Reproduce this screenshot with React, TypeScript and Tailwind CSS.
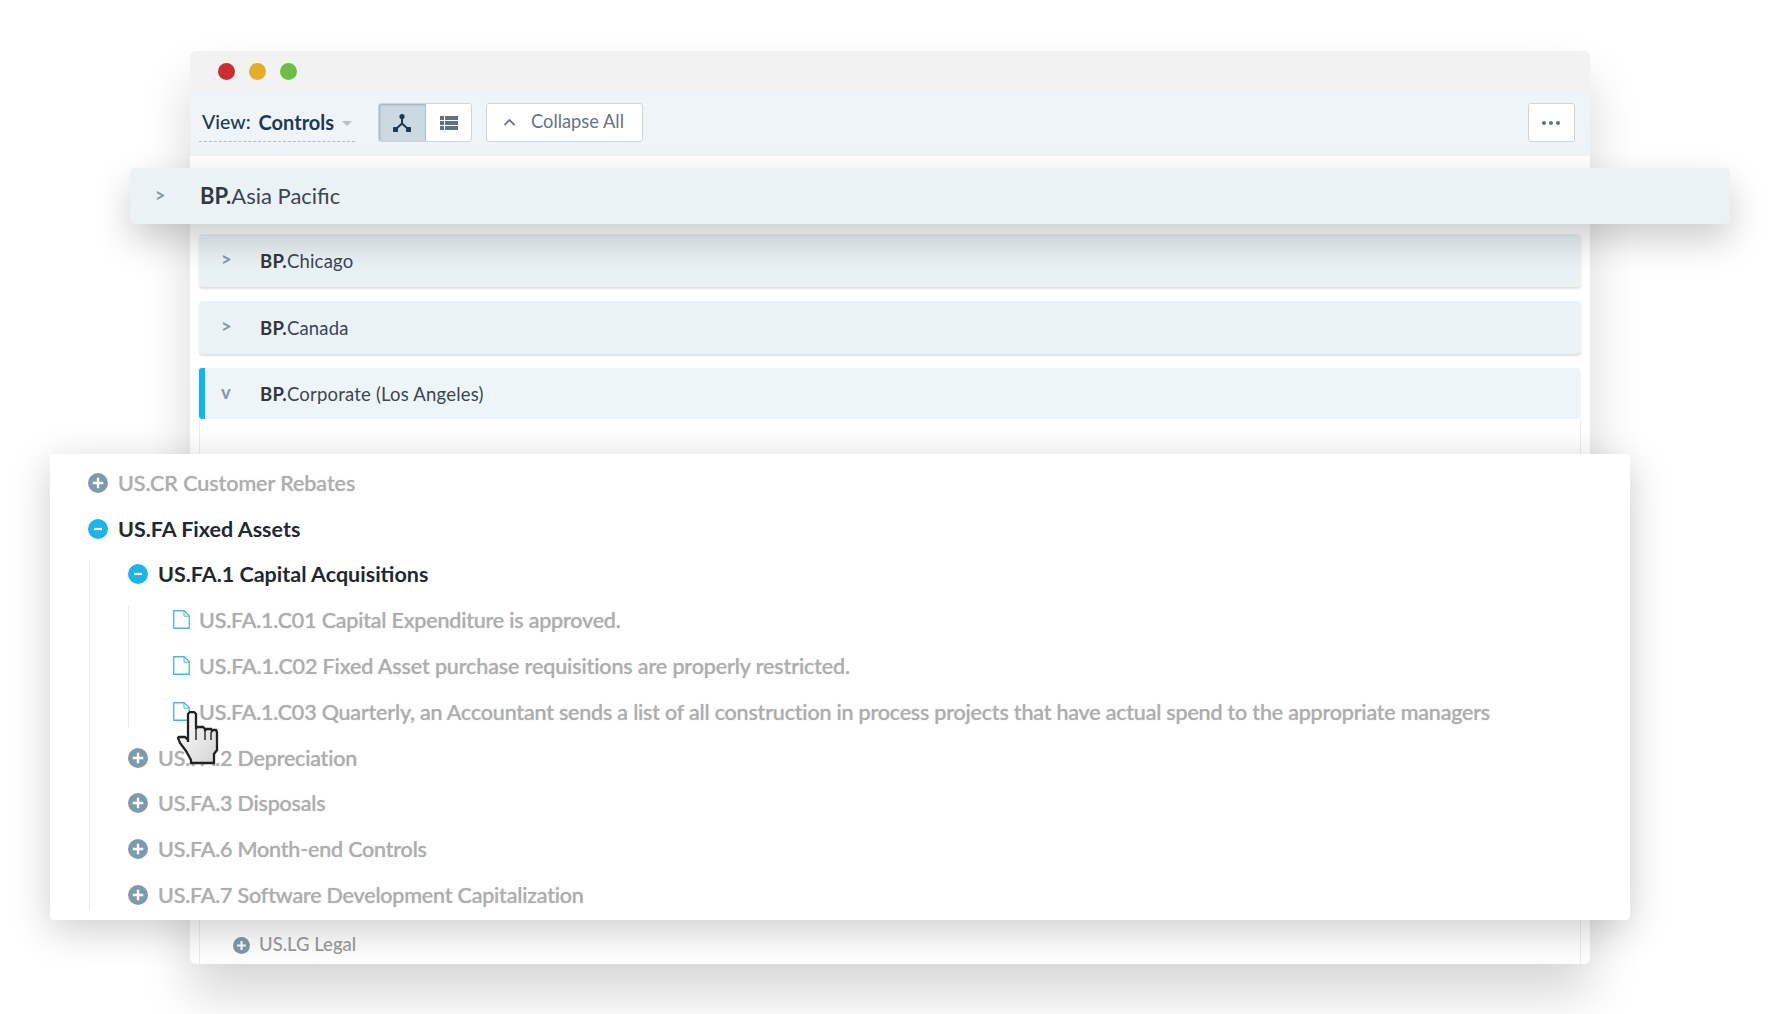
import React from "react";

function PlusIcon({ size = 20 }: { size?: number }) {
  return (
    <svg width={size} height={size} viewBox="0 0 20 20" className="shrink-0">
      <circle cx="10" cy="10" r="10" fill="#7d9bad" />
      <path d="M10 4.8v10.4M4.8 10h10.4" stroke="#fff" strokeWidth="2.4" />
    </svg>
  );
}

function MinusIcon() {
  return (
    <svg width={20} height={20} viewBox="0 0 20 20" className="shrink-0">
      <circle cx="10" cy="10" r="10" fill="#1db4ea" />
      <path d="M6 10h8" stroke="#fff" strokeWidth="2.2" />
    </svg>
  );
}

function FileIcon() {
  return (
    <svg width={17} height={19} viewBox="0 0 17 19" fill="none" className="ml-auto -mr-[1px] -mt-[1px] shrink-0">
      <path d="M.75.75h10.5l5 5v12.5H.75z" stroke="#4db6df" strokeWidth="1.3" />
      <path d="M11 .75v5.4h5.2" stroke="#4db6df" strokeWidth="1" />
    </svg>
  );
}

function Hand() {
  return (
    <svg width={42} height={54} viewBox="0 0 42 54" className="absolute left-[127px] top-[257px] z-10">
      <defs>
        <linearGradient id="handFill" x1="0" y1="0" x2="1" y2="1">
          <stop offset="0" stopColor="#ffffff" />
          <stop offset="1" stopColor="#d4d4d4" />
        </linearGradient>
      </defs>
      <path
        d="M11 31V3l2-2h4l2 2v15l1-2h6l2 2v2l1-2h5l1 2 1-1h3l1 2v18l-3 4v9H14v-3l-5-9-6-8-2-5 1-1h6l3 3"
        fill="url(#handFill)"
        stroke="#222"
        strokeWidth="2.3"
      />
      <path d="M19 18v11M28 20v9M34 21v8" stroke="#222" strokeWidth="1.4" fill="none" />
    </svg>
  );
}

function TreeRow({
  icon,
  children,
  active,
  tracking = "tracking-[-0.2px]",
}: {
  icon: React.ReactNode;
  children: React.ReactNode;
  active?: boolean;
  tracking?: string;
}) {
  return (
    <div
      className={
        "flex h-[45.8px] items-center whitespace-nowrap text-[21.5px] " +
        (active
          ? "text-[#23282e] font-bold tracking-[0px]"
          : "text-[#aeaeae] font-medium [text-shadow:0_0_1px_rgba(165,165,165,0.7)] " + tracking)
      }
    >
      <span className="flex w-[20px] items-center justify-center">{icon}</span>
      <span className="ml-[9px] pl-[1px]">{children}</span>
    </div>
  );
}

function GroupRow({ name, mt, tall, open }: { name: string; mt: string; tall?: boolean; open?: boolean }) {
  return (
    <div
      className={
        "relative flex items-center rounded-[4px] pt-[2px] text-[18.5px] tracking-[0.2px] text-[#3c4650] " +
        mt +
        (tall ? " h-[51px] bg-[#edf5f9]" : " h-[53px] bg-[#eaf2f6] shadow-[0_2px_2px_rgba(0,0,0,0.12)]")
      }
    >
      {open && <span className="absolute left-0 top-0 bottom-0 w-[6px] rounded-l-[3px] bg-[#0bb8f4]" />}
      <span className="w-[61px] pl-[22px] -mt-[3px] font-bold text-[#87989f]">{open ? "v" : ">"}</span>
      <span>
        <b className="font-bold text-[#33373c]">BP.</b>
        {name}
      </span>
    </div>
  );
}

export default function App() {
  return (
    <div className="h-[1014px] overflow-hidden bg-white pl-[190px] pt-[51px] font-['Lato',sans-serif]">
      <div className="flex h-[913px] w-[1400px] flex-col rounded-[6px] bg-white shadow-[0_30px_50px_rgba(0,0,0,0.16)]">
        <div className="flex h-[41px] items-center gap-[14px] rounded-t-[6px] bg-[#f2f2f2] pl-[28px]">
          <span className="h-[17px] w-[17px] rounded-full bg-[#c92f30]" />
          <span className="h-[17px] w-[17px] rounded-full bg-[#e0ae2b]" />
          <span className="h-[17px] w-[17px] rounded-full bg-[#6bbf44]" />
        </div>

        <div className="flex h-[64px] items-start bg-[#eef4f8] pl-[9px] pr-[15px] pt-[11px]">
          <div className="flex h-[39px] w-[156px] items-center border-b border-dashed border-[#aebdc8] pl-[3px] text-[19.5px] text-[#1d3a52]">
            <span className="font-medium">View:</span>
            <span className="ml-[8px] text-[20px] font-bold">Controls</span>
            <span className="ml-[8px] mt-[3px] h-0 w-0 border-x-[5px] border-t-[5px] border-x-transparent border-t-[#b7c2ca]" />
          </div>

          <div className="ml-[23px] flex h-[39px] w-[94px] overflow-hidden rounded-[3px] border border-[#c9d6df] bg-white">
            <div className="flex w-[47px] items-center justify-center border-r border-[#b4c5d1] bg-[#cbd9e2] shadow-[inset_1px_1px_2px_rgba(70,100,125,0.35)]">
              <svg width="20" height="20" viewBox="0 0 20 20" fill="#1d3a52">
                <circle cx="10" cy="3.5" r="2.6" />
                <rect x="1" y="14" width="5" height="5" rx="0.8" />
                <rect x="14" y="14" width="5" height="5" rx="0.8" />
                <path d="M10 4v7M10 10.5 4 16M10 10.5l6 5.5" stroke="#1d3a52" strokeWidth="2" fill="none" />
              </svg>
            </div>
            <div className="flex flex-1 items-center justify-center">
              <svg width="18" height="14" viewBox="0 0 18 14" fill="#5f7283">
                <rect x="0" y="0" width="4" height="4" />
                <rect x="5" y="0" width="13" height="4" />
                <rect x="0" y="5" width="4" height="4" />
                <rect x="5" y="5" width="13" height="4" />
                <rect x="0" y="10" width="4" height="4" />
                <rect x="5" y="10" width="13" height="4" />
              </svg>
            </div>
          </div>

          <div className="ml-[14px] flex h-[39px] w-[157px] items-center rounded-[3px] border border-[#c9d6df] bg-white pl-[16px] pb-[1px] text-[18.3px] text-[#66757f]">
            <svg width="13" height="9" viewBox="0 0 13 9" fill="none">
              <path d="M1.5 7 6.5 2l5 5" stroke="#6c7a85" strokeWidth="1.8" />
            </svg>
            <span className="ml-[15px]">Collapse All</span>
          </div>

          <div className="ml-auto flex h-[39px] w-[47px] items-center justify-center gap-[3px] rounded-[3px] border border-[#c9d6df] bg-white pr-[1px]">
            <span className="h-[4px] w-[4px] rounded-full bg-[#5f7283]" />
            <span className="h-[4px] w-[4px] rounded-full bg-[#5f7283]" />
            <span className="h-[4px] w-[4px] rounded-full bg-[#5f7283]" />
          </div>
        </div>

        <div className="flex flex-1 flex-col px-[9px]">
          <div className="relative z-10 -ml-[69px] -mr-[149px] mt-[12px] flex h-[56px] items-center rounded-[5px] bg-[#eaf2f6] text-[22px] text-[#3c4650] shadow-[0_16px_36px_rgba(0,0,0,0.2)]">
            <span className="w-[70px] pl-[25px] -mt-[1px] text-[18px] font-bold text-[#87989f]">{">"}</span>
            <span className="-mt-[1px]">
              <b className="font-bold text-[#33373c]">BP.</b>Asia Pacific
            </span>
          </div>

          <GroupRow name="Chicago" mt="mt-[10px]" />
          <GroupRow name="Canada" mt="mt-[14px]" />
          <GroupRow name="Corporate (Los Angeles)" mt="mt-[14px]" tall open />

          <div className="flex flex-1 flex-col border-x border-[#ececec] pt-[35px]">
            <div className="relative z-20 -ml-[150px] -mr-[50px] h-[466px] rounded-[4px] bg-white pl-[38px] pt-[6px] shadow-[0_10px_40px_rgba(0,0,0,0.2)]">
              <TreeRow icon={<PlusIcon />} tracking="tracking-[-0.05px]">US.CR Customer Rebates</TreeRow>
              <TreeRow icon={<MinusIcon />} active>US.FA Fixed Assets</TreeRow>
              <div className="relative pl-[40px]">
                <span className="absolute bottom-[8px] left-[1px] top-[9px] w-[1px] bg-[#ececec]" />
                <TreeRow icon={<MinusIcon />} active>US.FA.1 Capital Acquisitions</TreeRow>
                <div className="relative pl-[41px]">
                  <span className="absolute bottom-[7px] left-0 top-[9px] w-[1px] bg-[#ececec]" />
                  <TreeRow icon={<FileIcon />}>US.FA.1.C01 Capital Expenditure is approved.</TreeRow>
                  <TreeRow icon={<FileIcon />} tracking="tracking-[-0.12px]">US.FA.1.C02 Fixed Asset purchase requisitions are properly restricted.</TreeRow>
                  <TreeRow icon={<FileIcon />}>
                    US.FA.1.C03 Quarterly, an Accountant sends a list of all construction in process projects that have actual spend to the appropriate managers
                  </TreeRow>
                </div>
                <TreeRow icon={<PlusIcon />}>US.FA.2 Depreciation</TreeRow>
                <TreeRow icon={<PlusIcon />}>US.FA.3 Disposals</TreeRow>
                <TreeRow icon={<PlusIcon />}>US.FA.6 Month-end Controls</TreeRow>
                <TreeRow icon={<PlusIcon />}>US.FA.7 Software Development Capitalization</TreeRow>
              </div>
              <Hand />
            </div>
            <div className="flex flex-1 items-center pl-[33px] pt-[6px] text-[18.5px] font-medium text-[#9b9b9b]">
              <PlusIcon size={17} />
              <span className="ml-[9px]">US.LG Legal</span>
            </div>
          </div>
        </div>
      </div>
    </div>
  );
}
